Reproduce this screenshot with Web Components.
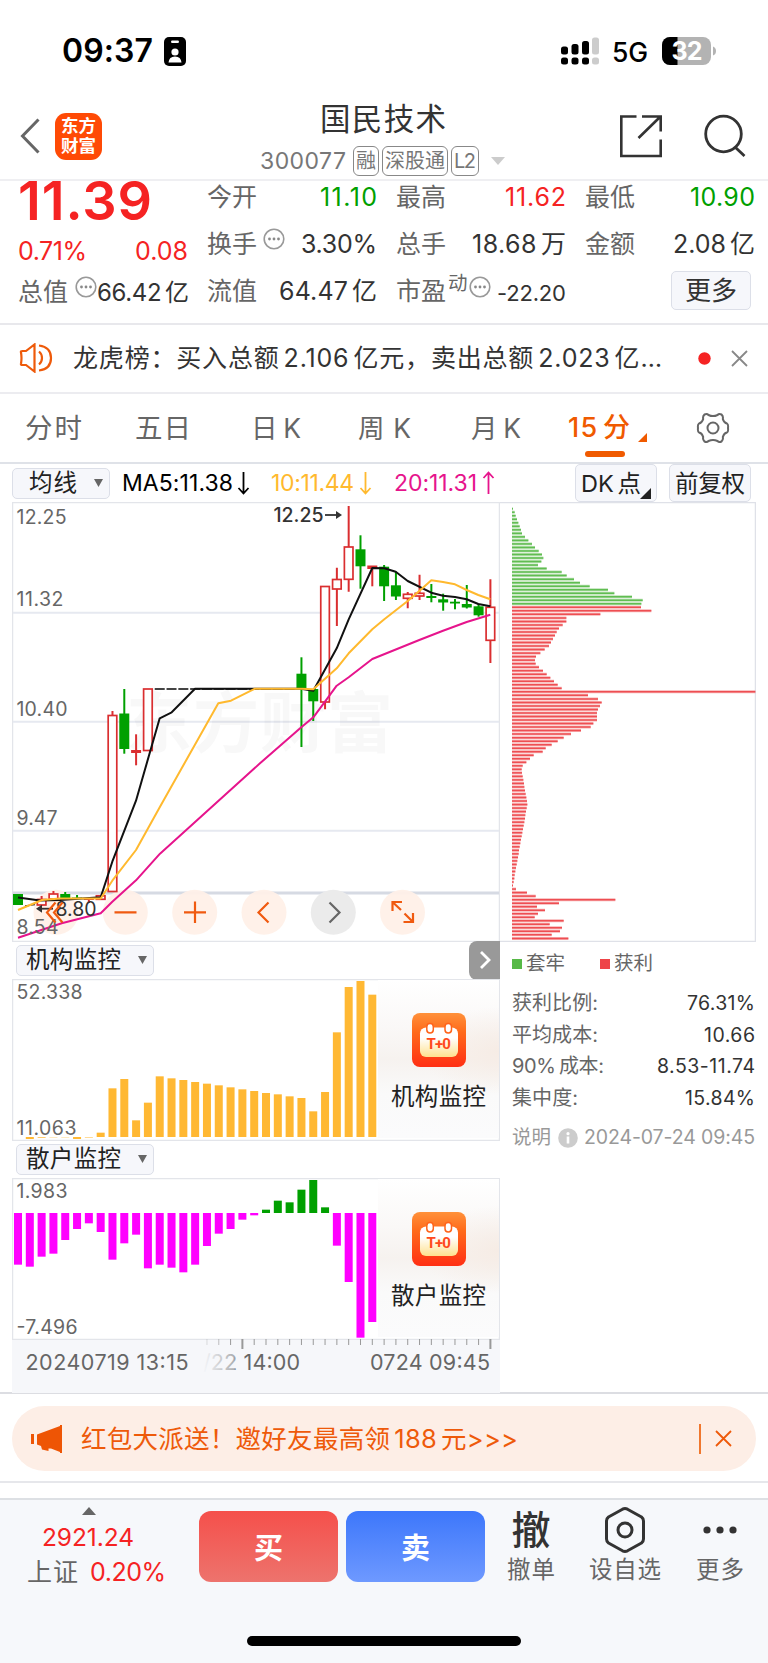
<!DOCTYPE html>
<html lang="zh-CN">
<head>
<meta charset="utf-8">
<title>国民技术 300077</title>
<style>
html,body{margin:0;padding:0;background:#fff}
body{width:768px;height:1663px;overflow:hidden;font-family:Inter,"Noto Sans CJK SC",sans-serif;color:#333;font-size:25px}
</style>
</head>
<body>
<stock-app></stock-app>
<script>
const define=(name,html,setup)=>{
  const t=document.createElement('template');t.innerHTML=html;
  customElements.define(name,class extends HTMLElement{
    constructor(){super();this.attachShadow({mode:'open'}).append(t.content.cloneNode(true));}
    connectedCallback(){if(setup)setup(this,this.shadowRoot);}
  });
};

/* One line of text, tracked so that it fills the width given in "w".
   Latin runs next to Han characters get a little air on each side. */
define('fit-text','<style>:host{display:block;flex:none;white-space:nowrap}span{display:inline-block}</style><span><slot></slot></span>',(el,r)=>{
  const s=r.querySelector('span'),w=+el.getAttribute('w'),txt=el.textContent;
  el.style.fontSize=el.getAttribute('s')+'px';
  if(el.hasAttribute('c'))el.style.color=el.getAttribute('c');
  if(el.hasAttribute('ml'))el.style.marginLeft=el.getAttribute('ml')+'px';
  const parts=txt.match(/[0-9.%A-Z]+|[^0-9.%A-Z]+/g)||[];
  if(parts.length>1&&/[一-龥]/.test(txt)){
    el.textContent='';
    parts.forEach((p,i)=>{
      const b=document.createElement('span');b.textContent=p;
      if(/^[0-9A-Z]/.test(p)){
        if(i&&/[一-龥]$/.test(parts[i-1]))b.style.marginLeft='.16em';
        if(parts[i+1]&&/^[一-龥]/.test(parts[i+1]))b.style.marginRight='.16em';
      }
      el.append(b);
    });
  }
  const n=[...txt].length,nat=s.getBoundingClientRect().width;
  el.style.width=w+'px';
  if(n>1)s.style.letterSpacing=((w-nat)/(n-1))+'px';
});

define('status-bar',`<style>:host{display:flex;height:100px;align-items:center;box-sizing:border-box;padding:2px 0 0 62px;color:#000;line-height:30px}
svg{flex:none}.bat{margin-left:14px}</style>
<fit-text w="91" s="32" style="font-weight:600">09:37</fit-text>
<svg width="22" height="29" viewBox="0 0 22 29" style="margin-left:11px"><rect width="22" height="29" rx="5"/><rect x="7" y="3.5" width="8" height="2.4" rx="1.2" fill="#fff"/><circle cx="11" cy="15" r="3.6" fill="#fff"/><path d="M4.5 25.5q.5-6 6.500-6t6.500 6z" fill="#fff"/></svg>
<svg width="40" height="28" viewBox="0 0 40 28" style="margin-left:374px"><g><rect x="1" y="9.500" width="7" height="8" rx="2.500"/><rect x="11.500" y="7" width="7" height="10.500" rx="2.500"/><rect x="22" y="4" width="7" height="13.500" rx="2.500"/><rect x="1" y="20.500" width="7" height="7" rx="2.500"/><rect x="11.500" y="20.500" width="7" height="7" rx="2.500"/><rect x="22" y="20.500" width="7" height="7" rx="2.500"/></g><g fill="#ccc"><rect x="32" y="0.500" width="7" height="17" rx="2.500"/><rect x="32" y="20.500" width="7" height="7" rx="2.500"/></g></svg>
<fit-text w="36" s="26.5" ml="12" style="font-weight:500;position:relative;top:1px">5G</fit-text>
<svg class="bat" width="54" height="28" viewBox="0 0 54 28"><defs><clipPath id="b"><rect width="49" height="28" rx="8"/></clipPath></defs><g clip-path="url(#b)"><rect width="49" height="28" fill="#b3b3b3"/><rect width="15.500" height="28"/></g><path d="M51 9.500q3 1 3 4.500t-3 4.500z" fill="#b3b3b3"/><text x="9.500" y="23" font-size="25" font-weight="700" fill="#fff" textLength="31">32</text></svg>`);

define('tag-box',`<style>:host{display:flex;box-sizing:border-box;height:30px;border:1.500px solid #888;border-radius:6px;align-items:center;justify-content:center;line-height:26px;color:#777;flex:none}</style><slot></slot>`);

define('app-header',`<style>:host{display:grid;grid-template-columns:240px 1fr 240px;height:81px;box-sizing:border-box;border-bottom:2px solid #efeff2}
.l,.r{display:flex;align-items:center;padding-top:0}.l{padding:0 0 7px 20px}
.logo{width:47px;height:47px;margin-left:15px;border-radius:11px;background:#ff4a05;color:#fff;font-weight:700;line-height:20px;display:flex;flex-direction:column;align-items:center;justify-content:center;padding:0}
.c{display:flex;flex-direction:column;align-items:flex-start}.t{line-height:38px;margin:0 0 0 80px}.s{display:flex;align-items:center;height:30px;margin:8px 0 0 20px;line-height:30px}
.r{padding:0 0 8px 91px}svg{display:block;flex:none}</style>
<div class="l"><svg width="20" height="36" viewBox="0 0 20 36"><path d="M18.500 1.500 2.500 18l16 16.500" fill="none" stroke="#666" stroke-width="3"/></svg><div class="logo"><fit-text w="35" s="17.5">东方</fit-text><fit-text w="35" s="17.5">财富</fit-text></div></div>
<div class="c"><fit-text class="t" w="126" s="30.5">国民技术</fit-text><div class="s"><fit-text w="86" s="23" c="#777">300077</fit-text><tag-box style="width:26px;margin-left:7px"><fit-text w="20" s="20">融</fit-text></tag-box><tag-box style="width:66px;margin-left:3px"><fit-text w="60" s="20">深股通</fit-text></tag-box><tag-box style="width:28px;margin-left:3px"><fit-text w="22" s="20">L2</fit-text></tag-box><svg width="14" height="8" style="margin-left:12px"><path d="M0 0h14L7 8z" fill="#ccc"/></svg></div></div>
<div class="r"><svg width="44" height="44" viewBox="0 0 44 44" fill="none" stroke="#333" stroke-width="2.600"><path d="M17.500 2.500H2.300V42H41.700V25.500M23 2.500H41.700V17.500M19.500 24 41 3"/></svg><svg width="44" height="44" viewBox="0 0 44 44" fill="none" stroke="#333" stroke-width="2.800" style="margin-left:40px"><circle cx="20.500" cy="20" r="17.800"/><path d="M32 33 41.500 42"/></svg></div>`);

define('more-dot',`<style>:host{display:block;flex:none;width:22px;height:22px}svg{display:block}</style><svg width="22" height="22" viewBox="0 0 22 22"><circle cx="11" cy="11" r="9.800" fill="none" stroke="#999" stroke-width="1.600"/><g fill="#888"><circle cx="6.500" cy="11" r="1.400"/><circle cx="11" cy="11" r="1.400"/><circle cx="15.500" cy="11" r="1.400"/></g></svg>`);

define('quote-board',`<style>:host{display:flex;gap:20px;height:144px;box-sizing:border-box;padding:0 0 0 19px;border-bottom:2px solid #e8e8ec}
.col{width:169px;flex:none}.row{display:flex;align-items:center;justify-content:space-between;height:33px;line-height:33px;color:#333}
.row>fit-text:first-child,.lab{margin-left:-1px}
.col .row:nth-child(2){height:60px}.col .row:nth-child(3){height:35px}
.p{height:40px!important;line-height:40px;font-weight:600}.z{height:22px!important}
.lab{display:flex;align-items:center}more-dot{position:relative;top:-5px}
.btn{width:80px;height:39px;box-sizing:border-box;border:1.500px solid #dcdfe8;border-radius:5px;background:#f6f7fb;display:flex;align-items:center;justify-content:center;margin:-3px 4px 0 auto}</style>
<div class="col"><div class="row p"><fit-text w="134" s="54" c="#f52323">11.39</fit-text></div><div class="row"><fit-text w="69" s="25" c="#f52323">0.71%</fit-text><fit-text w="53" s="25" c="#f52323">0.08</fit-text></div><div class="row z"><div class="lab"><fit-text w="50" s="25" c="#666">总值</fit-text><more-dot style="margin-left:7px"></more-dot></div><fit-text w="92" s="24">66.42亿</fit-text></div></div>
<div class="col"><div class="row"><fit-text w="50" s="25" c="#666">今开</fit-text><fit-text w="57" s="25" c="#00a000">11.10</fit-text></div><div class="row"><div class="lab"><fit-text w="50" s="25" c="#666">换手</fit-text><more-dot style="margin-left:6px"></more-dot></div><fit-text w="76" s="25">3.30%</fit-text></div><div class="row"><fit-text w="50" s="25" c="#666">流值</fit-text><fit-text w="98" s="25">64.47亿</fit-text></div></div>
<div class="col"><div class="row"><fit-text w="50" s="25" c="#666">最高</fit-text><fit-text w="61" s="25" c="#f52323">11.62</fit-text></div><div class="row"><fit-text w="50" s="25" c="#666">总手</fit-text><fit-text w="94" s="25">18.68万</fit-text></div><div class="row"><div class="lab"><fit-text w="50" s="25" c="#666">市盈</fit-text><fit-text w="20" s="19.500" c="#666" ml="2" style="position:relative;top:-8px">动</fit-text><more-dot style="margin-left:1px"></more-dot></div><fit-text w="69" s="22" style="position:relative;top:2px">-22.20</fit-text></div></div>
<div class="col"><div class="row"><fit-text w="50" s="25" c="#666">最低</fit-text><fit-text w="65" s="25" c="#00a000">10.90</fit-text></div><div class="row"><fit-text w="50" s="25" c="#666">金额</fit-text><fit-text w="82" s="25">2.08亿</fit-text></div><div class="row"><div class="btn"><fit-text w="52" s="26">更多</fit-text></div></div></div>`);

define('notice-bar',`<style>:host{display:flex;align-items:center;height:69px;box-sizing:border-box;border-bottom:2px solid #ececf0;padding:0 0 1px 19px;line-height:40px}svg{flex:none}</style>
<svg width="34" height="30" viewBox="0 0 34 30" fill="none" stroke="#ee5a0a" stroke-width="2.200"><path d="M2 9.500Q1.500 8 3.500 8H7L15.500 1.500V28.500L7 22H3.500Q1.500 22 2 20.500Q3 15 2 9.500zM20 8.500Q23 11 23 15T20 21.500M20 2.500Q32 4 32 15T20 27.500"/></svg>
<fit-text w="589" s="25" ml="20">龙虎榜：买入总额2.106亿元，卖出总额2.023亿…</fit-text>
<svg width="13" height="13" style="margin-left:36px"><circle cx="6.500" cy="6.500" r="6.200" fill="#f52323"/></svg>
<svg width="17" height="17" viewBox="0 0 17 17" style="margin-left:20px"><path d="M1 1 16 16M16 1 1 16" stroke="#888" stroke-width="1.800"/></svg>`);

define('period-tabs',`<style>:host{display:flex;align-items:center;height:70px;box-sizing:border-box;border-bottom:2px solid #dfe2e8;padding-left:25px;line-height:40px}fit-text{color:#666}svg{flex:none}
.on{position:relative;margin-left:47px}.on i{position:absolute;left:17px;top:43px;width:40px;height:6px;border-radius:3px;background:#f05a00}</style>
<fit-text w="57" s="27.5">分时</fit-text><fit-text w="56" s="27.5" ml="53">五日</fit-text><fit-text w="50" s="26.5" ml="60">日K</fit-text><fit-text w="53" s="26.5" ml="57">周K</fit-text><fit-text w="50" s="26.5" ml="60">月K</fit-text>
<div class="on"><fit-text w="62" s="27" c="#f05a00" style="font-weight:500">15分</fit-text><i></i></div>
<svg width="9" height="9" style="margin:19px 0 0 8px"><path d="M9 0v9H0z" fill="#f05a00"/></svg>
<svg width="34" height="32" viewBox="-17 -16 34 32" fill="none" stroke="#666" stroke-width="2" style="margin-left:49px"><path stroke-linejoin="round" d="M-8.500-13.500Q-6-14.800-4.500-13Q0-10.800 4.500-13Q6-14.800 8.500-13.500Q10.500-11.500 9.800-9Q11-5 14-4.500Q15.500-3.500 15 0Q15.500 3.500 14 4.500Q11 5 9.800 9Q10.500 11.500 8.500 13.500Q6 14.800 4.500 13Q0 10.800-4.500 13Q-6 14.800-8.500 13.500Q-10.500 11.500-9.800 9Q-11 5-14 4.500Q-15.500 3.500-15 0Q-15.500-3.500-14-4.500Q-11-5-9.800-9Q-10.500-11.500-8.500-13.500z"/><circle r="5.500"/></svg>`);

define('drop-button',`<style>:host{display:flex;flex:none;align-items:center;justify-content:space-between;box-sizing:border-box;height:31px;border:1.500px solid #dcdfe8;border-radius:5px;background:#f6f7fb;padding:0 6px 0 9px;line-height:28px;color:#222}svg{flex:none}</style><slot></slot><svg width="9" height="8"><path d="M0 0h9L4.500 8z" fill="#666"/></svg>`);

define('ma-toolbar',`<style>:host{display:flex;align-items:center;height:38px;padding-left:12px;line-height:37px}
.b{position:relative;box-sizing:border-box;height:38px;border:1.500px solid #dcdfe8;border-radius:5px;background:#f6f7fb;color:#222;padding-left:5px}.b svg{position:absolute;right:5px;bottom:2px}</style>
<drop-button style="width:98px;padding-left:16px"><fit-text w="48" s="23.5">均线</fit-text></drop-button>
<fit-text w="111" s="23" c="#000" ml="12">MA5:11.38</fit-text><ar-row c="#000" style="margin-left:4px"></ar-row>
<fit-text w="83" s="23" c="#ffb92e" ml="21">10:11.44</fit-text><ar-row c="#ffb92e" style="margin-left:5px"></ar-row>
<fit-text w="83" s="23" c="#e6148c" ml="22">20:11.31</fit-text><ar-row c="#e6148c" up style="margin-left:5px"></ar-row>
<div class="b" style="width:82px;margin-left:80px"><fit-text w="60" s="23.5">DK点</fit-text><svg width="11" height="11"><path d="M11 0v11H0z" fill="#222"/></svg></div>
<div class="b" style="width:82px;margin-left:12px"><fit-text w="70" s="23.5">前复权</fit-text></div>`);
define('ar-row','<style>:host{display:block;flex:none;width:13px;height:24px}svg{display:block}</style><svg width="13" height="24" viewBox="0 0 13 24" fill="none" stroke-width="1.800"><path d="M6.500 1v21M1.500 17l5 5.500 5-5.500"/></svg>',(el,r)=>{const s=r.querySelector('svg');s.style.stroke=el.getAttribute('c');if(el.hasAttribute('up'))s.style.transform='rotate(180deg)';});

const X=i=>18+11.81*i;
/* index, kind (g solid, r hollow, s solid red), body top, body bottom, high, low */
const candles=[[0,'g',894,905,894,905],[2,'r',899.5,905,896,906],[3,'r',894,899,891,900],[4,'g',894,898,892,898],[5,'g',897.5,898.5,895,899],[6,'s',899,900,898,903],[7,'r',895.8,899.3,895,900],
[8,'r',715.5,891.5,711,892],[9,'g',713.5,749,689,753.7],[10,'s',750,753,734.3,765.3],[11,'r',689,750.5,689,750],[24,'g',673.7,688.3,657.3,747],[25,'g',689,701.3,689,721],[26,'r',586.5,702,586,709.3],[27,'r',579.5,589,567.7,626],[28,'r',547,579.3,506,591.7],[29,'g',549.3,566.3,535.3,588.7],[30,'s',565.5,569,566,586.3],[31,'g',566.7,586.3,565,601],[32,'g',585.3,596.5,571.7,600],[33,'r',594.3,598.3,592,608.3],[34,'r',593.3,596,574.7,600],[35,'g',596,598,584,602.3],[36,'g',599.3,602.5,593.7,610.7],[37,'g',601.7,603.5,599,609.3],[38,'g',604,607.5,585,608.5],[39,'g',606.3,615.3,604,616.7],[40,'r',607.3,640.3,579.3,663]];
const ma={'#111':'18,897.500 40,900.500 60,900 100.700,897.300 112.300,861.700 136,800.700 159.700,718.300 171.700,712.300 195,688.700 301,688.700 313.300,690.700 336.700,648.300 348.700,619.300 372.300,568 384.300,568.300 395.700,571.700 407.700,581 431.300,592.700 443,595.700 455,597 466.700,599.300 478.300,604 490.300,606.300',
'#ffb92e':'18,910 42,900 60,898.500 100.700,898.500 112.300,880.700 136,850 160,806.700 218.300,703.300 231,700.700 255,688.700 301,688.700 313.300,689.300 336.700,668.300 348.700,653.300 372.300,629.300 384.300,619.300 407.700,601 419.300,591 431.300,580.300 443,582 455,584.300 466.700,590 478.300,595 490.300,599.300',
'#e6148c':'18,937.700 61.700,923.300 100.700,913.300 112.300,901.700 136,880.300 160,853.700 260,763.300 301.300,727.300 313.300,717.300 325,701.700 336.700,685.700 348.700,677.300 372.300,659 419.300,640 443,630.700 466.700,622 490.300,614.700'};
const lab=(x,y,w,t,o='')=>`<text x="${x}" y="${y}" font-size="19.500" fill="#666" textLength="${w}" ${o}>${t}</text>`;

define('k-chart','<style>:host{display:block;height:439px}svg{display:block}</style><div></div>',(el,r)=>{
  let s='<svg width="488" height="440" viewBox="12 502 488 440"><g fill="none" stroke="#e3e5ea"><rect x="12.500" y="502.500" width="487" height="439" stroke-width="1.500"/></g>';
  for(const y of[612.7,721.7,830.7])s+=`<path d="M13 ${y}H499" stroke="#e6e9f0" stroke-width="2"/>`;
  s+='<path d="M13 893H499" stroke="#d6dae3" stroke-width="3"/>';
  s+='<text x="126" y="747" font-size="66" font-weight="700" fill="#666" fill-opacity=".045" textLength="267">东方财富</text>';
  for(const [i,x] of [56,125.3,194.7,264,333.3,402.5].entries())s+=`<circle cx="${x}" cy="912.300" r="22.500" fill="${i==4?'#ebebeb':'#fff0e8'}" fill-opacity="${i==4?1:.95}"/>`;
  for(const [i,k,a,b,h,l] of candles){const x=X(i),c=k=='g'?'#00a000':'#da2e30';
    if(k=='r')s+=`<path d="M${x} ${h}V${a}M${x} ${b}V${l}" stroke="${c}" stroke-width="2"/><rect x="${x-4.3}" y="${a}" width="8.600" height="${b-a}" fill="#fff" stroke="${c}" stroke-width="1.700"/>`;
    else s+=`<path d="M${x} ${h}V${l}" stroke="${c}" stroke-width="2"/><rect x="${x-5}" y="${a}" width="10" height="${b-a}" fill="${c}"/>`;}
  for(let i=12;i<24;i++)s+=`<path d="M${X(i)-5} 689h10" stroke="#444" stroke-width="2"/>`;
  s+='<path d="M25 906l10-1.500" stroke="#333" stroke-width="1.500" stroke-dasharray="4 2"/>';
  for(const c in ma)s+=`<polyline points="${ma[c]}" fill="none" stroke="${c}" stroke-width="2" stroke-linejoin="round"/>`;
  for(const [y,t,w] of[[524,'12.25',50],[606,'11.32',47],[716,'10.40',51],[825,'9.47',41],[934,'8.54',42]])s+=lab(16.5,y,w,t);
  s+='<g fill="none" stroke="#333" stroke-width="1.800"><path d="M325 515H340"/><path d="M53 908.700H38"/></g><path d="M342 515l-6-4v8zM36 908.700l6-4v8z" fill="#333"/>';
  s+=lab(273.5,522,50,'12.25','style="fill:#333;font-weight:500"')+lab(55.5,916,41,'8.80','style="fill:#333"');
  s+='<g fill="none" stroke="#f05a10" stroke-width="2.200"><path d="M55.500 902.500 47 912.500l8.500 10M62.500 902.500 54 912.500l8.500 10M114.500 912.300h22M184 912.300h22M195 901.500v21.500M268.500 902.500l-10 10 10 10"/><path d="M392.500 911v-9h9.500M392.500 902l8.500 8M403.500 922h9.500v-9M413 922l-8.500-8.500"/></g><path d="M329.500 902.500l10 10-10 10" fill="none" stroke="#666" stroke-width="2.200"/></svg>';
  r.querySelector('div').innerHTML=s;
});

define('side-toggle',`<style>:host{display:flex;width:31px;height:39px;background:#999;border-radius:8px 0 0 8px;align-items:center;justify-content:center}</style><svg width="12" height="20" viewBox="0 0 12 20"><path d="M2 2l8 8-8 8" fill="none" stroke="#fff" stroke-width="2.800"/></svg>`);
define('sub-head',`<style>:host{display:flex;height:38px;justify-content:space-between;align-items:center;padding-left:4px;box-sizing:border-box}drop-button{width:138px}</style><drop-button><slot></slot></drop-button><slot name="end"></slot>`);

define('promo-tile',`<style>:host{display:flex;flex-direction:column;align-items:center;width:121px;height:158px;padding-top:33px;box-sizing:border-box;background:radial-gradient(ellipse 65% 28% at 100% 45%,#f6ece5,transparent),linear-gradient(#fff,#faf8f7 30%,#f6f2ef 50%,#fafafa 72%,#fbfbfc);color:#222}svg{display:block}.t{line-height:26px;margin-top:17px}</style>
<svg width="54" height="54" viewBox="0 0 54 54"><defs><linearGradient id="a" x2="0" y2="1"><stop stop-color="#ff913a"/><stop offset=".35" stop-color="#ff6a1a"/><stop offset="1" stop-color="#ff2f14"/></linearGradient><linearGradient id="c" x2="0" y2="1"><stop offset=".35" stop-color="#fff"/><stop offset="1" stop-color="#ffe18e"/></linearGradient></defs><rect width="54" height="54" rx="8" fill="url(#a)"/><rect x="8" y="14.500" width="38" height="29.500" rx="6" fill="url(#c)"/><g fill="#fff" stroke="#ff6319" stroke-width="1.500"><rect x="14.800" y="10.500" width="6.500" height="9.500" rx="3.200"/><rect x="33" y="10.500" width="6.500" height="9.500" rx="3.200"/></g><g font-size="15" font-weight="700" fill="#ff4a1c" font-family="Roboto"><text x="14.500" y="36" textLength="25" lengthAdjust="spacing" style="letter-spacing:.6px">T+0</text></g></svg>
<div class="t"><slot></slot></div>`);

const barsA={7:608,8:475,9:447,10:571,11:518,12:439,13:445,14:450,15:456,16:461,17:466,18:472,19:478,20:483,21:489,22:493,23:499,24:504,25:544,26:486,27:307,28:171,29:153,30:194};
const barsB=[404,410,380,371,330,297,280,306,389,340,314,415,404,413,427,404,348,311,297,269,256,239,212,217,179,150,232,347,456,623,576];
define('sub-chart','<style>:host{display:grid;height:162px}#g,.o{grid-area:1/1}.o{justify-self:end;margin:1px 1px 0 0}svg{display:block}</style><div id="g"></div><div class="o"><slot></slot></div>',(el,r)=>{
  const k=el.getAttribute('kind'),a=k=='inst',y0=a?979:1178;
  let s=`<svg width="488" height="162" viewBox="12 ${y0} 488 162"><rect x="12.500" y="${y0+.5}" width="487" height="161" fill="none" stroke="#e3e5ea" stroke-width="1.500"/>`;
  if(a){for(const i in barsA){const t=930+barsA[i]/3;s+=`<rect x="${X(+i)-4}" y="${t}" width="8" height="${1137-t}" fill="#ffb833"/>`;}
    for(const [i,h,o] of[[1,2,1],[2,1,.7],[3,1,.3],[4,1,.3],[5,2,1],[6,1,.5]])s+=`<rect x="${X(i)-4}" y="1137" width="8" height="${h}" fill="#ffb833" opacity="${o}"/>`;
    s+=lab(16.5,999.300,66,'52.338')+lab(16.5,1135,60,'11.063');
  }else{barsB.forEach((c,i)=>{const e=1130+c/3,t=Math.min(e,1213);s+=`<rect x="${X(i)-4}" y="${t}" width="8" height="${Math.abs(e-1213)}" fill="${e<1213?'#00a000':'#f0f'}"/>`;});
    s+=lab(16.5,1198,51,'1.983')+lab(16.5,1334,61,'-7.496');}
  r.querySelector('#g').innerHTML=s+'</svg>';
});

define('time-axis','<style>:host{display:block;height:54px;background:#f6f7fa}svg{display:block}</style><div></div>',(el,r)=>{
  let s='<svg width="488" height="54" viewBox="12 1339 488 54"><defs><linearGradient id="f" gradientUnits="userSpaceOnUse" x1="203" x2="242" y1="0" y2="0"><stop stop-color="#666" stop-opacity="0"/><stop offset=".8" stop-color="#666" stop-opacity=".5"/><stop offset=".85" stop-color="#666"/></linearGradient></defs>';
  for(let i=16;i<=40;i++){const big=i==19||i==40;s+=`<path d="M${X(i)} 1339v${big?10:6}" stroke="#999" stroke-width="${big?2:1}" opacity="${i==16?.3:i==17?.6:1}"/>`;}
  const t=(x,w,c,f='#666')=>`<text x="${x}" y="1369.500" font-size="21.500" fill="${f}" textLength="${w}">${c}</text>`;
  s+=t(25.5,163,'20240719 13:15')+t(203,97,'/22 14:00','url(#f)')+t(370,120,'0724 09:45')+'</svg>';
  r.querySelector('div').innerHTML=s;
});

const dist=[39,44,47,51,55,59,63,66,75,85,96,105,116,126,130,124,114,140,185,200,222,240,269,324,343,396,428,424,423,454,301,199,199,188,177,170,165,159,153,147,134,121,108,105,107,117,129,140,151,162,173,185,766,264,294,305,300,294,291,291,291,280,272,243,213,191,173,155,137,128,101,90,79,68,65,66,68,70,72,73,75,77,79,81,82,80,78,76,75,73,71,69,67,65,63,61,59,57,56,54,52,50,48,46,44,43,41,39,48,81,107,346,177,111,135,114,104,191,149,186,180,155,205];
define('chip-chart','<style>:host{display:block;height:440px}svg{display:block}</style><div></div>',(el,r)=>{
  let s='<svg width="256" height="440" viewBox="500 502 256 440"><path d="M500 502.500H755.500V941.500H500" fill="none" stroke="#dfe1e8" stroke-width="1.500"/>';
  dist.forEach((c,i)=>{const y=508.700+i*3.522,w=(c-36)/3,f=i<28?'#57b947':'#ee4448';s+=`<path d="M512 ${y}h${w}" stroke="${f}" stroke-width="3" opacity=".4"/><path d="M512 ${y}h${w}" stroke="${f}" stroke-width="1.500" opacity=".9"/>`;});
  r.querySelector('div').innerHTML=s+'</svg>';
});

define('chip-stats',`<style>:host{display:block;padding:6px 13px 0 12px;line-height:31.500px}.r{display:flex;justify-content:space-between;align-items:center;height:31.500px;color:#666}.r fit-text+fit-text{color:#333}
.g{display:flex;align-items:center;height:31px;margin-bottom:9px;color:#666}i{width:10px;height:10px;display:block;flex:none}.n{display:flex;align-items:center;height:32px;margin-top:8px;color:#999}.n fit-text{color:#999}</style>
<div class="g"><i style="background:#57b947"></i><fit-text w="39" s="19.5" ml="4">套牢</fit-text><i style="background:#ee4448;margin-left:35px"></i><fit-text w="39" s="19.5" ml="4">获利</fit-text></div>
<div class="r"><fit-text w="86" s="20">获利比例:</fit-text><fit-text w="68" s="19.5">76.31%</fit-text></div>
<div class="r"><fit-text w="86" s="20">平均成本:</fit-text><fit-text w="51" s="19.5">10.66</fit-text></div>
<div class="r"><fit-text w="92" s="20">90%成本:</fit-text><fit-text w="98" s="19.5">8.53-11.74</fit-text></div>
<div class="r"><fit-text w="66" s="20">集中度:</fit-text><fit-text w="70" s="19.5">15.84%</fit-text></div>
<div class="n"><fit-text w="39" s="19.5">说明</fit-text><svg width="20" height="20" style="margin-left:7px;flex:none"><circle cx="10" cy="10" r="9.800" fill="#ccc"/><rect x="8.700" y="8.500" width="2.600" height="7" fill="#fff"/><circle cx="10" cy="5.700" r="1.600" fill="#fff"/></svg><fit-text w="171" s="19.5" ml="6">2024-07-24 09:45</fit-text></div>`);

define('chart-area',`<style>:host{display:grid;grid-template-columns:488px 1fr;height:892px;padding-left:12px;box-sizing:border-box;border-bottom:2px solid #dcdde2}
fit-text{line-height:26px}.i,.j{height:161px}</style>
<div><k-chart></k-chart><sub-head><fit-text w="95" s="23.5">机构监控</fit-text><side-toggle slot="end"></side-toggle></sub-head><sub-chart class="i" kind="inst"><promo-tile><fit-text w="95" s="23.5">机构监控</fit-text></promo-tile></sub-chart><sub-head><fit-text w="95" s="23.5">散户监控</fit-text></sub-head><sub-chart class="j" kind="retail"><promo-tile><fit-text w="95" s="23.5">散户监控</fit-text></promo-tile></sub-chart><time-axis></time-axis></div>
<div><chip-chart></chip-chart><chip-stats></chip-stats></div>`);

define('promo-banner',`<style>:host{display:flex;align-items:center;height:65px;margin:12px 12px 0;border-radius:33px;background:#fdeee6;padding-left:19px;box-sizing:border-box;line-height:40px}svg{flex:none}i{width:2px;height:30px;background:#f0772e;margin-left:181px}</style>
<svg width="32" height="28" viewBox="0 0 32 28" fill="#ee5505"><path d="M0 9h3v10H0zM6 9.500 29 1V27L20 23.500 17.500 23.500V26L11 24.500 10 21 6 19.500z"/><path d="M29 0h2v28h-2z"/></svg>
<fit-text w="437" s="25.5" c="#ee5a0a" ml="18">红包大派送！邀好友最高领188元&gt;&gt;&gt;</fit-text><i></i>
<svg width="17" height="17" viewBox="0 0 17 17" style="margin-left:14px"><path d="M1 1 16 16M16 1 1 16" stroke="#ee5a0a" stroke-width="1.800"/></svg>`);

define('trade-btn',`<style>:host{display:flex;flex:none;width:139px;height:71px;border-radius:12px;align-items:center;justify-content:center;color:#fff;font-weight:700;padding-bottom:1px;box-sizing:border-box}</style><slot></slot>`);
define('nav-item',`<style>:host{display:flex;flex:none;flex-direction:column;align-items:center;color:#666;line-height:30px}.i{height:46px;display:flex;align-items:center;justify-content:center;color:#333;margin-bottom:2px}</style><div class="i"><slot name="icon"></slot></div><slot></slot>`);
define('trade-bar',`<style>:host{display:block;height:165px;border-top:2px solid #dde0e4;background:#f6f8fb;box-sizing:border-box}
.m{display:flex;height:136px;box-sizing:border-box}.x{width:199px;display:flex;flex-direction:column;line-height:30px}.x .q{display:flex}
.h{width:274px;height:10px;border-radius:5px;background:#000;margin:0 auto}svg{display:block}</style>
<div class="m"><div class="x"><svg width="14" height="8" style="margin:7px 0 0 82px"><path d="M7 0l7 8H0z" fill="#666"/></svg><fit-text w="92" s="24.5" c="#f52323" ml="42" style="margin-top:7px">2921.24</fit-text><div class="q" style="margin-top:5px"><fit-text w="51" s="25" c="#666" ml="27">上证</fit-text><fit-text w="76" s="25" c="#f52323" ml="12">0.20%</fit-text></div></div>
<trade-btn style="margin-top:11px;background:linear-gradient(#f5504b,#ed736d)"><fit-text w="29" s="29">买</fit-text></trade-btn><trade-btn style="margin:11px 0 0 8px;background:linear-gradient(#3d77fb,#6e99ff)"><fit-text w="29" s="29">卖</fit-text></trade-btn>
<nav-item style="margin:7px 0 0 22px"><fit-text slot="icon" w="39" s="39" style="font-weight:500">撤</fit-text><fit-text w="48" s="23.5">撤单</fit-text></nav-item>
<nav-item style="margin:7px 0 0 34px"><svg slot="icon" width="42" height="46" viewBox="0 0 42 46" fill="none" stroke="#333" stroke-width="3"><path stroke-linejoin="round" d="M18.500 2.200Q21 1 23.500 2.200L37.500 10Q39.500 11.500 39.500 14V32Q39.500 34.500 37.500 36L23.500 43.800Q21 45 18.500 43.800L4.500 36Q2.500 34.500 2.500 32V14Q2.500 11.500 4.500 10z"/><circle cx="21" cy="23" r="7"/></svg><fit-text w="72" s="23.5">设自选</fit-text></nav-item>
<nav-item style="margin:7px 0 0 35px"><svg slot="icon" width="34" height="8" fill="#333"><circle cx="4" cy="4" r="3.600"/><circle cx="17" cy="4" r="3.600"/><circle cx="30" cy="4" r="3.600"/></svg><fit-text w="48" s="23.5">更多</fit-text></nav-item></div>
<div class="h"></div>`);

define('stock-app',`<style>:host{display:block;width:768px;height:1663px;overflow:hidden;background:#fff}.gap{height:15px;margin-top:10px;border-top:2px solid #e6e7eb}</style>
<status-bar></status-bar><app-header></app-header><quote-board></quote-board><notice-bar></notice-bar><period-tabs></period-tabs><ma-toolbar></ma-toolbar><chart-area></chart-area><promo-banner></promo-banner><div class="gap"></div><trade-bar></trade-bar>`);
</script>
</body>
</html>
